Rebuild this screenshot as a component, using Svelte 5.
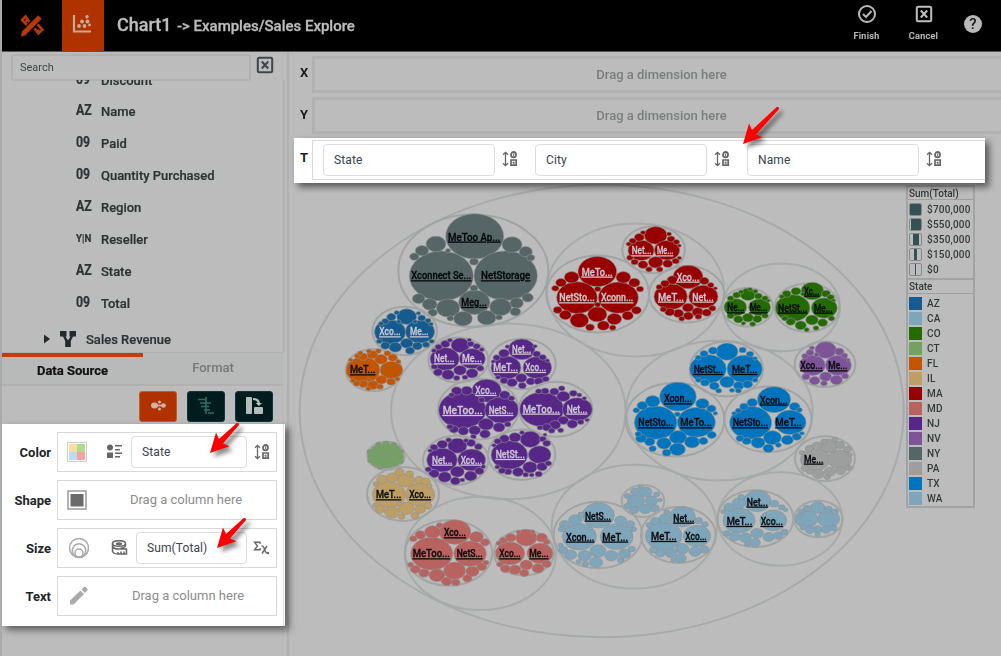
<script>
  const fields = [
    ['AZ', 'Name'], ['09', 'Paid'], ['09', 'Quantity Purchased'], ['AZ', 'Region'],
    ['Y|N', 'Reseller'], ['AZ', 'State'], ['09', 'Total']
  ];
  const dims = ['State', 'City', 'Name'];
  const sizes = [['$700,000', 13], ['$550,000', 10], ['$350,000', 6], ['$150,000', 3], ['$0', 1]];
  const colors = {
    AZ: '#165b8f', CA: '#7ea5ba', CO: '#236b00', CT: '#73a162', FL: '#c35500', IL: '#bd9f65', MA: '#980000',
    MD: '#b96360', NJ: '#572788', NV: '#7e5499', NY: '#566565', PA: '#9d9f9e', TX: '#0075bd', WA: '#7ea5ba'
  };
  const lightInk = ['AZ', 'NJ', 'MA'];
  // Enclosing rings: cx cy rx
  const rings = [
    [905, 693, 906], [625, 694, 352], [541, 1120, 227], [1006, 330, 266], [1444, 382, 176],
    [1258, 692, 280], [1003, 1040, 248], [1440, 1017, 187]
  ];
  // state, origin x, origin y, ring, bubbles (cx cy rx), labels (text, x, y, width)
  const clusters = [
    ['NY', 0, 0, [520, 272, 225], '524 169 86,424 288 95,617 287 94,523 367 46,408 192 28,366 212 18,343 230 12,636 194 28,677 215 18,692 233 10,444 212 6,522 245 11,522 324 10,356 356 17,389 373 20,398 398 12,444 384 33,489 416 26,451 415 8,560 413 26,602 381 31,597 412 8,650 369 18,646 395 14,683 353 15', [['MeToo Ap...', 444, 172, 157], ['Xconnect Se...', 334, 288, 180], ['NetStorage', 543, 288, 148], ['Meg...', 484, 368, 76]]],
    ['AZ', 0, 0, [314, 453, 97], '320 410 28,270 456 46,360 455 43,274 411 12,256 424 9,243 431 6,365 414 10,384 422 7,393 432 5,355 400 5,290 398 6,320 490 17,286 502 17,256 497 12,238 484 7,352 498 13,378 494 9,395 484 6,330 512 12,296 425 5,345 425 5', [['Xco...', 238, 456, 64], ['Me...', 330, 456, 56]]],
    ['FL', 0, 0, [221, 570, 84], '189 570 50,274 570 32,243 538 17,217 524 14,189 530 12,172 528 7,235 513 7,262 520 8,278 533 12,295 545 6,244 599 15,219 615 15,190 612 12,170 610 9,159 602 6,273 605 11,292 597 6,240 620 8,205 626 6,207 600 5,152 540 5,207 514 6,181 519 6', [['MeT...', 150, 570, 76]]],
    ['NJ', 0, 0, [475, 540, 90], '481 496 26,434 537 43,517 536 38,436 492 12,416 501 9,402 512 6,512 492 9,530 499 9,545 509 6,480 571 17,444 584 17,414 577 12,403 560 8,516 580 16,541 565 9,470 594 8,495 592 7,450 481 6,508 480 5', [['Net...', 402, 537, 61], ['Me...', 486, 537, 60]]],
    ['NJ', 0, 0, [666, 552, 101], '665 508 39,618 563 44,712 563 42,612 520 14,590 533 9,580 545 5,622 500 5,710 522 10,728 532 9,742 542 5,664 594 15,636 608 14,612 602 10,594 592 6,692 604 12,716 604 12,737 597 9,667 617 10,705 499 5', [['Net...', 636, 508, 58], ['MeT...', 580, 563, 74], ['Xco...', 676, 563, 62]]],
    ['NJ', 0, 0, [535, 688, 121], '560 632 43,487 690 70,605 690 50,500 632 15,470 633 14,455 645 7,614 645 14,634 655 8,558 733 21,524 751 16,490 753 14,462 748 12,450 740 8,597 742 16,623 733 8,555 762 14,520 770 7,545 660 8', [['Xco...', 526, 632, 64], ['MeToo...', 428, 692, 120], ['NetS...', 566, 692, 74]]],
    ['NJ', 0, 0, [767, 688, 110], '725 688 65,832 688 44,790 649 18,763 635 12,735 633 10,716 634 8,785 625 8,820 640 10,838 645 6,853 655 5,790 721 14,765 735 15,740 742 12,720 743 7,817 732 14,842 726 8,755 752 8,782 751 7,861 720 5', [['MeToo...', 668, 688, 112], ['Net...', 800, 688, 62]]],
    ['NJ', 0, 660, [467, 181, 98], '472 137 27,426 180 45,515 180 41,427 133 14,402 142 10,390 152 5,446 120 7,513 129 12,535 140 10,498 122 6,472 215 19,434 231 18,402 221 14,385 208 8,512 228 17,538 213 12,549 200 6,466 243 13,487 240 6', [['Net...', 396, 181, 61], ['Xco...', 482, 181, 64]]],
    ['NJ', 0, 660, [665, 164, 101], '691 118 29,628 165 54,719 164 32,645 112 16,613 116 13,593 124 9,582 136 5,666 98 6,728 117 9,740 130 10,735 104 4,690 202 20,654 216 15,624 215 10,606 212 9,592 201 6,726 200 14,745 190 8,716 222 9,677 224 7,695 225 6', [['NetSt...', 587, 164, 88]]],
    ['CT', 0, 660, [258, 167, 56], '258 147 20,232 152 17,284 151 17,218 168 13,245 168 17,272 171 16,297 170 12,230 186 15,256 190 17,282 187 15,258 131 8,236 134 8,281 134 8,210 155 7,304 155 6,212 182 7,303 184 7,240 201 7,272 202 8', []],
    ['IL', 0, 660, [309, 282, 108], '267 284 49,360 284 43,318 241 24,277 233 16,246 238 14,298 216 12,329 222 10,357 240 12,378 245 12,388 258 7,228 252 7,319 325 22,276 337 20,240 328 13,225 316 6,360 328 14,384 318 10,305 350 8,345 347 10,298 312 6', [['MeT...', 228, 285, 76], ['Xco...', 328, 285, 65]]],
    ['MD', 0, 660, [446, 459, 131], '465 396 46,395 461 62,510 461 48,398 396 22,361 405 14,340 416 9,419 376 8,529 411 19,555 427 12,464 512 31,411 526 22,372 519 14,346 508 13,332 494 7,517 514 18,545 500 13,558 488 7,440 544 14,467 547 11,502 535 12', [['Xco...', 432, 399, 66], ['MeToo...', 338, 462, 112], ['NetS...', 470, 462, 78]]],
    ['MD', 0, 660, [672, 459, 90], '679 413 30,630 460 43,720 460 38,632 413 14,610 422 10,596 430 6,698 395 5,725 413 15,740 426 8,679 495 17,645 509 16,616 506 13,600 493 8,714 505 16,740 492 12,673 519 12,655 396 5', [['Xco...', 598, 462, 64], ['Me...', 688, 462, 58]]],
    ['MA', 660, 0, [233, 342, 154], '232 275 57,171 353 60,295 353 59,155 292 20,123 308 14,106 325 9,310 292 20,343 308 15,360 327 9,233 327 8,232 403 27,178 421 26,136 405 16,113 390 11,283 417 20,323 407 15,349 391 13,250 437 16,210 442 11,278 443 8,233 374 7', [['MeTo...', 185, 277, 93], ['NetSto...', 118, 354, 106], ['Xconn...', 243, 354, 97]]],
    ['MA', 660, 0, [401, 209, 94], '407 166 32,363 211 38,441 211 37,358 172 13,338 183 9,326 192 6,453 177 10,469 186 8,478 197 4,407 247 20,369 254 13,344 246 9,330 233 8,443 251 13,467 243 9,478 234 5,387 268 8,419 268 8,369 158 6,447 162 6', [['Net...', 335, 213, 60], ['Me...', 411, 213, 49]]],
    ['MA', 660, 0, [500, 343, 113], '504 291 44,452 350 49,550 350 43,457 300 14,435 311 11,418 321 8,553 303 12,572 315 8,586 325 4,504 383 15,475 400 14,449 396 13,430 388 8,533 396 15,560 398 12,577 385 9,505 408 13,485 416 7,535 410 8', [['Xco...', 470, 292, 68], ['MeT...', 414, 352, 78], ['Net...', 517, 352, 64]]],
    ['CO', 660, 0, [682, 382, 77], '684 343 22,646 382 32,719 382 31,650 345 10,632 355 8,715 348 10,735 355 8,690 328 5,745 362 4,684 413 15,655 418 12,632 407 9,712 417 12,735 407 8,698 432 7,670 430 5,663 336 6,706 334 6', [['Ne...', 622, 384, 52], ['Me...', 689, 384, 53]]],
    ['CO', 660, 0, [861, 383, 97], '877 333 32,818 384 51,913 384 38,828 334 13,800 342 11,785 350 6,918 341 11,932 352 9,876 420 17,842 436 15,812 425 12,795 415 8,908 428 13,934 415 8,860 449 6,888 444 7,848 342 5,941 361 4', [['Xc...', 852, 334, 46], ['NetSt...', 774, 385, 88], ['Me...', 882, 385, 56]]],
    ['NV', 660, 0, [915, 553, 91], '917 510 30,877 556 38,955 556 38,870 518 10,855 528 8,958 515 12,973 527 8,985 540 4,917 590 16,884 602 14,858 590 10,949 600 16,975 588 9,912 610 8,876 504 6,890 524 6', [['Xco...', 841, 558, 67], ['Me...', 925, 558, 57]]],
    ['TX', 660, 0, [619, 567, 110], '621 515 31,564 567 54,674 567 52,579 512 12,552 521 10,535 533 7,668 510 9,690 522 9,705 535 5,621 606 20,583 618 13,555 608 11,535 600 7,656 617 14,683 613 13,705 600 7,596 632 7,636 631 6,655 632 7', [['NetSt...', 521, 569, 88], ['MeT...', 636, 569, 76]]],
    ['TX', 660, 0, [465, 719, 148], '474 650 54,407 728 63,529 727 56,398 664 20,367 677 14,349 691 8,547 671 18,574 686 12,586 700 5,474 772 24,432 790 20,389 785 14,363 775 14,398 806 9,355 762 8,516 786 21,550 783 12,575 765 12,472 808 22,440 818 11,472 703 7', [['Xcon...', 432, 657, 84], ['NetSto...', 355, 729, 105], ['MeTo...', 481, 729, 95]]],
    ['TX', 660, 0, [744, 718, 131], '762 659 49,692 728 62,811 727 46,697 668 14,672 680 11,655 692 7,642 700 5,824 680 14,838 690 7,757 773 25,714 788 19,680 783 12,660 775 10,802 780 16,830 770 12,846 760 5,745 805 14,775 795 7', [['Xcon...', 720, 661, 82], ['NetSto...', 638, 729, 106], ['MeT...', 766, 729, 79]]],
    ['PA', 660, 660, [915, 176, 90], '885 178 43,959 178 34,927 138 24,890 138 13,868 145 10,960 135 12,982 148 10,855 205 10,895 222 16,930 215 15,962 212 13,985 203 8,912 125 8,945 119 7,870 214 9,922 232 7,845 158 6,990 164 5', [['Me...', 852, 178, 58]]],
    ['CA', 660, 660, [234, 405, 133], '235 346 47,178 410 50,290 410 48,166 360 18,134 374 14,125 388 8,302 362 16,330 373 12,341 388 7,234 453 22,194 467 18,152 464 16,130 450 11,274 467 18,314 461 16,335 447 9,228 487 18,196 492 8,176 485 6,302 480 8,184 344 8,122 436 6', [['NetS...', 195, 349, 78], ['Xcon...', 138, 412, 85], ['MeT...', 247, 412, 77]]],
    ['CA', 660, 660, [369, 303, 64], '348 303 24,394 302 17,377 276 17,345 275 12,323 288 8,410 283 7,420 300 5,376 327 16,343 330 12,323 318 9,404 325 12,362 262 6', []],
    ['CA', 660, 660, [475, 405, 112], '487 350 38,431 408 54,531 408 40,434 356 16,405 363 12,388 375 8,536 362 10,555 373 8,487 446 18,453 459 16,421 459 13,400 450 10,525 455 16,553 448 12,482 475 15,460 480 6,440 336 7', [['Net...', 460, 355, 63], ['MeT...', 393, 410, 77], ['Xco...', 496, 410, 64]]],
    ['WA', 660, 660, [706, 356, 114], '712 303 40,657 361 47,760 361 39,657 309 18,627 322 14,610 335 6,763 311 11,785 322 8,797 330 5,711 400 17,676 413 16,644 409 15,620 400 9,746 411 15,774 407 12,793 396 9,705 428 14,682 432 7,664 291 8', [['Net...', 680, 307, 64], ['MeT...', 620, 365, 77], ['Xco...', 722, 365, 67]]],
    ['WA', 660, 660, [895, 357, 73], '893 323 20,859 357 32,926 357 31,862 325 10,845 335 8,925 328 10,945 335 8,893 388 12,870 390 12,850 382 8,918 389 12,940 384 9,893 403 6', []]
  ].map(([state, ox, oy, ring, list, labels]) => ({
    state, ox, oy, ring, labels,
    bubbles: list.split(',').map((b) => b.split(' ').map(Number))
  }));
  const k = 1.335;
  // Small rim bubbles are drawn a little fuller so that neighbours touch
  const rx = (r) => (r < 35 ? r + 2 : r + 1);
</script>

{#snippet sort()}
  <svg class="sort" width="16" height="16" viewBox="0 0 16 16" fill="none" stroke="#666">
    <path d="M3.500 1.500v13M1 3.800l2.500-2.500L6 3.800M1 12.200l2.500 2.500L6 12.200" stroke-width="1.300" />
    <ellipse cx="11.500" cy="3.700" rx="2.500" ry="2.700" stroke-width="1.800" />
    <path d="M9 9h5.200v5.200H9z" stroke-width="1.700" />
    <path d="M11.600 2.500v2.500M11.800 10.500v2.500M10.500 11.800h2" stroke-width="1" />
  </svg>
{/snippet}

{#snippet closeBox()}
  <svg width="18" height="18" viewBox="0 0 18 18" fill="none" stroke="currentColor" stroke-width="2">
    <rect x="1.800" y="1.800" width="14.400" height="14.400" rx="1.500" /><path d="M5.800 5.500l6.400 7M12.200 5.500l-6.400 7" />
  </svg>
{/snippet}

{#snippet arrow(cls, len)}
  <svg class="arrow {cls}" width="50" height="54" viewBox="0 -44 50 54">
    <path d="M1 0L7 -20.500L10 -14L{len - 1.300} {-len - 1}Q{len + 1.500} {-len - 1.500} {len + 1} {1 - len}L14 -9.500L20.500 -6.700Z" fill="#f00" />
  </svg>
{/snippet}

<div class="app">
  <header>
    <div class="logo soft">
      <svg width="24" height="24" viewBox="0 0 24 24" fill="none" stroke="#b83907">
        <path d="M4 20L20 4" stroke-width="5" />
        <path d="M9.500 9L5.500 3.500L2 7l5 5M14.500 15.500l4 5 4-4-5-5M5.500 8.500l2-2M17 19l2-2" stroke-width="2.500" />
        <path d="M1 23.500l1.200-6 4.600 4.600z" fill="#b83907" stroke="none" />
      </svg>
    </div>
    <div class="tile">
      <svg class="soft" width="20" height="20" viewBox="0 0 20 20" fill="none" stroke="#c7aa99" stroke-width="2.200">
        <path d="M2 1v16.500h17" />
        <g fill="#c7aa99" stroke="none"><circle cx="7" cy="12" r="1.900" /><circle cx="10" cy="7.500" r="1.900" /><circle cx="12.500" cy="12" r="1.900" /><circle cx="15.500" cy="7.500" r="1.900" /><circle cx="15" cy="2.800" r="1.700" /><circle cx="17.500" cy="11" r="1.400" /></g>
      </svg>
    </div>
    <h1 class="soft">Chart1 <small>-&gt; Examples/Sales Explore</small></h1>
    <div class="action soft">
      <svg width="20" height="20" viewBox="0 0 20 20" fill="none" stroke="#b9b9b9" stroke-width="2"><circle cx="10" cy="10" r="8" /><path d="M6 10l3 3 5.500-6" /></svg>
      <span>Finish</span>
    </div>
    <div class="action soft">{@render closeBox()}<span>Cancel</span></div>
    <div class="help soft">?</div>
  </header>

  <div class="body">
    <aside>
      <div class="tools soft"><div class="search">Search</div>{@render closeBox()}</div>
      <div class="tree soft">
        <div class="clipped"><div class="row"><b>09</b><span>Discount</span></div></div>
        {#each fields as [kind, name]}
          <div class="row"><b class:bool={kind === 'Y|N'}>{kind}</b><span>{name}</span></div>
        {/each}
        <div class="row folder">
          <svg width="6" height="10"><path d="M0 0.500L6 5L0 9.500Z" fill="#222a2b" /></svg>
          <svg width="16" height="16" viewBox="0 0 16 16" fill="#222a2b"><path d="M0 0h6.500v5.500H5.500L8 9.500l2.500-4H9.500V0H16v5.500h-3L10.800 10V16H5.200v-6L3 5.500H0z" /></svg>
          <span>Sales Revenue</span>
        </div>
      </div>
      <div class="tabs soft"><div class="tab on">Data Source</div><div class="tab">Format</div></div>
      <div class="modes soft">
        <div class="mode orange"><svg width="38" height="30" fill="#cbb5a8"><ellipse cx="15.500" cy="14.500" rx="3.500" ry="3" /><path d="M17 13.700h8v1.600h-8z" /><circle cx="20.500" cy="11" r="1.500" /><circle cx="20.500" cy="18" r="1.500" /><circle cx="24.500" cy="14.500" r="2.300" /></svg></div>
        <div class="mode"><svg width="38" height="30" stroke="#2f6a69" stroke-width="1.600"><path d="M19 6v17M11 8.500h8M13 12h11M14 15.500h8M17 19h6M21 22h6" /></svg></div>
        <div class="mode"><svg width="38" height="30" fill="#b5bcbc"><rect x="11" y="6" width="6" height="17" rx="1" /><rect x="19" y="16" width="9" height="7" rx="1" /><path d="M18 7q6.500 0 7 5h2l-3 3-3.500-3h2q-.5-3-4.500-3z" /></svg></div>
      </div>

      <section class="bindings">
        <div class="bind"><label>Color</label>
          <div class="well">
            <svg class="lead" width="20" height="20"><rect x=".5" y=".5" width="19" height="19" fill="#fff" stroke="#ccc" /><path d="M2 2h8v8H2z" fill="#fbdda3" /><path d="M10 2h8v8h-8z" fill="#aedb8d" /><path d="M2 10h8v8H2z" fill="#b9dcf2" /><path d="M10 10h8v8h-8z" fill="#faa1a0" /></svg>
            <svg class="kind" width="16" height="15" viewBox="0 0 16 15" fill="#666"><circle cx="3" cy="3.500" r="3" /><path d="M0 8.500h6V14H0zM8 1h7v1.500H8zM8 5h5v1.500H8zM8 8.500h7V10H8zM8 12h5v1.500H8z" /></svg>
            <div class="field">State</div>
            {@render sort()}
          </div>
        </div>
        <div class="bind"><label>Shape</label>
          <div class="well"><svg class="lead" width="20" height="20"><rect x="1" y="1" width="18" height="18" fill="#fff" stroke="#999" stroke-width="1.500" /><rect x="3.500" y="4" width="13" height="12.500" fill="#6b6b6b" /></svg><span class="hint">Drag a column here</span></div>
        </div>
        <div class="bind"><label>Size</label>
          <div class="well">
            <svg class="lead" width="22" height="22" fill="none" stroke="#aaa" stroke-width="1.500"><circle cx="12" cy="11" r="9.500" /><circle cx="12" cy="13.500" r="6.700" /><circle cx="12" cy="16" r="4" /></svg>
            <svg class="kind size" width="17" height="15" viewBox="0 0 17 15" fill="none" stroke="#666" stroke-width="1.500"><ellipse cx="8" cy="3.500" rx="6.500" ry="2.800" /><ellipse cx="8" cy="3.700" rx="2.500" ry=".8" /><path d="M1.500 3.500v3q2 3 7 2.500h7v5H7q-6 0-5.500-4M1.500 6.500v5M14.500 4v2q-1 2-5 2.300M7 12V14M10 11.500v2.500M13 11.500v2.500" /></svg>
            <div class="field sum">Sum(Total)</div>
            <svg class="sigma" width="17" height="16" viewBox="0 0 17 16" fill="none" stroke="#666" stroke-width="1.400"><path d="M7 4V2.200H1.500L4.500 6 1.500 9.800H7V8M8.500 6q1.500-.5 2.300 1.500l1.900 4.500q.8 1.500 2.300 1M14 6L9 13.500" /><circle cx="15" cy="13" r=".5" /></svg>
          </div>
        </div>
        <div class="bind"><label>Text</label>
          <div class="well"><svg class="lead" width="22" height="20" fill="#aaa"><path d="M3 14.500L13.500 4.500l3.500 3.500L6.500 18.500H3zM14.500 3.500L17 1q1-.6 2 .3l1.300 1.400q.8 1 0 1.800L18 7z" /></svg><span class="hint wide">Drag a column here</span></div>
        </div>
      </section>
    </aside>

    <main>
      <div class="axis soft"><b>X</b><div class="drop">Drag a dimension here</div></div>
      <div class="axis second soft"><b>Y</b><div class="drop">Drag a dimension here</div></div>
      <div class="band"></div>
      <section class="groups">
        <b>T</b>
        <div class="slots">
          {#each dims as d}
            <div class="field">{d}</div>{@render sort()}
          {/each}
        </div>
      </section>
      <div class="view soft">
        <svg width="617" height="473" viewBox="-33 9 1851 1419">
          <g fill="none" stroke="#a6aaa9" stroke-width="6">
            {#each rings as [x, y, r]}<ellipse cx={x} cy={y} rx={r} ry={r / k} />{/each}
          </g>
          {#each clusters as c}
            <g transform="translate({c.ox} {c.oy})">
              <ellipse cx={c.ring[0]} cy={c.ring[1]} rx={c.ring[2]} ry={c.ring[2] / k} fill="none" stroke="#a0a4a3" stroke-width="6" />
              <g fill={colors[c.state]} stroke="#8f9190" stroke-width="1.800">
                {#each c.bubbles as [x, y, r]}<ellipse cx={x} cy={y} rx={rx(r)} ry={rx(r) * 0.78} />{/each}
              </g>
              {#each c.labels as [t, x, y, w]}
                <text {x} y={y + 10} textLength={w} lengthAdjust="spacingAndGlyphs" class:light={lightInk.includes(c.state)}>{t}</text>
              {/each}
            </g>
          {/each}
        </svg>
        <div class="legend">
          <h2>Sum(Total)</h2>
          <ul>
            {#each sizes as [t, w]}<li><i class="gauge"><i style="width:{w}px"></i></i>{t}</li>{/each}
          </ul>
          <h2 class="state">State</h2>
          <ul>
            {#each Object.entries(colors) as [t, c]}<li><i class="swatch" style="background:{c}"></i>{t}</li>{/each}
          </ul>
        </div>
      </div>
    </main>
  </div>
  {@render arrow('a1', 29)}
  {@render arrow('a2', 29)}
  {@render arrow('a3', 36)}
</div>

<style>
  :global(body) { background: #bcbcbc; overflow: hidden; }
  * { box-sizing: border-box; }
  svg { display: block; flex: none; }
  .app { position: relative; width: 1001px; height: 656px; overflow: hidden; font: 13px Roboto, sans-serif; color: #2b3333; background: #bcbcbc; border-left: 2px solid #aaa; }
  .soft { filter: blur(0.55px); }
  header { display: flex; height: 52px; background: #000; border-bottom: 1px solid #555; color: #bdbdbd; }
  .logo { width: 60px; padding: 13px 0 0 18px; }
  .tile { width: 42px; background: #b03200; padding: 14px 0 0 10px; }
  h1 { flex: 1; margin: 0 0 0 13px; font-size: 18px; line-height: 49px; font-weight: 500; white-space: nowrap; -webkit-text-stroke: .3px; }
  small { font-size: 15px; margin-left: 1px; letter-spacing: -0.01px; }
  .action { width: 57px; display: flex; flex-direction: column; align-items: center; font-size: 9px; padding-top: 4px; font-weight: 500; position: relative; left: -1px; }
  .action svg { height: 20px; }
  .action span { margin-top: 6px; line-height: 12px; letter-spacing: .3px; -webkit-text-stroke: .2px; }
  .help { width: 18px; height: 18px; border-radius: 50%; background: #b9b9b9; color: #111; font: 500 15px/18px Roboto, sans-serif; text-align: center; margin: 15px 19px 0 11px; }
  .body { display: flex; height: 604px; }
  aside { width: 287px; border-right: 2px solid #b1b1b1; }
  .tools { display: flex; gap: 5px; height: 28px; padding: 2px 0 0 9px; color: #3d4747; }
  .tools > svg { margin-top: 2px; }
  .search { width: 240px; height: 27px; border: 2px solid #b1b1b1; border-radius: 3px; font-size: 11px; line-height: 23px; padding-left: 7px; flex: none; }
  .tree { height: 272px; overflow: hidden; border-right: 2px solid #b3b3b3; width: 283px; -webkit-text-stroke: .2px; }
  .clipped { height: 15px; overflow: hidden; display: flex; align-items: flex-end; }
  .row { height: 32px; display: flex; align-items: center; padding-left: 74px; flex: none; font-weight: 500; }
  .row b { width: 25px; font: 700 14px Roboto, sans-serif; transform: scaleX(.88); transform-origin: left; margin-top: -2px; }
  .row b.bool { font-size: 11px; }
  .row:not(.folder) span { letter-spacing: -.03px; }
  .clipped .row { margin-bottom: -1px; }
  .folder { padding-left: 42px; gap: 10px; height: 40px; }
  .tabs { display: flex; height: 34px; border-top: 1px solid #afafaf; border-bottom: 2px solid #b1b1b1; background: #b8b9b9; width: 281px; }
  .tab { width: 141px; text-align: center; color: #777; line-height: 29px; font-weight: 500; }
  .on { width: 142px; color: #111; font-weight: 700; border-top: 4px solid #c04000; line-height: 28px; -webkit-text-stroke: .2px; }
  .modes { display: flex; gap: 10px; padding: 5px 0 0 137px; height: 38px; }
  .mode { width: 38px; height: 31px; border-radius: 3px; background: #001c1c; border: 1px solid #134; }
  .mode svg { margin: -1px; }
  .orange { background: #b03200; border-color: #c06020; }
  .bindings { position: relative; width: 283px; height: 202px; background: #fff; border-right: 1px solid #fff; box-shadow: 4px 4px 7px rgba(0,0,0,.5), inset -1px 0 #ddd; padding: 8px 0 0; display: flex; flex-direction: column; gap: 8px; }
  .bind { display: flex; align-items: center; height: 40px; }
  label { width: 49px; text-align: right; font-weight: 700; color: #1d2428; margin-right: 6px; }
  .well { width: 220px; height: 40px; border: 1px solid #d8d8d8; display: flex; align-items: center; padding-left: 9px; }
  .kind { margin-left: 20px; margin-top: -2px; }
  .field { border: 1px solid #dadddd; border-radius: 4px; height: 32px; line-height: 30px; padding-left: 10px; font-size: 12px; letter-spacing: .1px; color: #39434a; }
  .well .field { width: 116px; margin-left: 8px; flex: none; }
  .well .sum { width: 111px; margin-left: 8px; }
  .well .size { margin-left: 22px; }
  .well .sort { margin: -1px 0 0 7px; }
  .hint { flex: 1; text-align: center; padding-left: 9px; color: #8c8c8c; margin-top: -1px; }
  .hint.wide { padding-left: 11px; }
  .sigma { margin: -1px 0 0 6px; }
  main { flex: 1; min-width: 0; }
  .axis { display: flex; align-items: center; padding-left: 11px; height: 36px; margin-top: 4px; }
  .axis b, .groups b { flex: none; width: 12px; color: #181c1c; font-size: 13px; }
  .axis b { margin-top: -3px; }
  .axis.second { height: 37px; margin-top: 5px; }
  .drop { flex: none; width: 699px; height: 37px; line-height: 31px; border: 3px solid #b1b1b1; text-align: center; color: #7b7d7d; font-weight: 500; }
  .band { height: 4px; }
  .groups { position: relative; z-index: 1; margin-left: 5px; width: 691px; height: 45px; background: #fff; box-shadow: 4px 4px 7px rgba(0,0,0,.55); display: flex; padding: 2px 0 0 6px; }
  .groups b { line-height: 36px; }
  .slots { width: 673px; height: 40px; border: 1px solid #d8d8d8; border-right: 0; display: flex; align-items: center; padding-left: 10px; }
  .slots .field { width: 172px; }
  .slots .sort { margin: -2px 17px 0 7px; }
  .view { display: flex; height: 473px; }
  text { font: 500 30px Roboto, sans-serif; fill: #05080a; stroke: #05080a; stroke-width: .8px; text-decoration: underline; }
  text.light { fill: #cfc9d3; stroke: #cfc9d3; }
  .legend { width: 69px; height: 323px; margin-top: 2px; border: 2px solid #a3a3a3; font-size: 10px; font-weight: 500; color: #333a3a; }
  h2 { margin: 0; font: 500 10px/13px Roboto, sans-serif; height: 13px; padding-left: 1px; border-bottom: 1px solid #9f9f9f; }
  h2.state { border-top: 2px solid #a3a3a3; height: 16px; }
  ul { list-style: none; margin: 0; padding: 2px 0 1px 1px; }
  li { height: 15px; display: flex; align-items: center; gap: 5px; white-space: nowrap; letter-spacing: .2px; }
  .swatch, .gauge { width: 13px; height: 13px; flex: none; }
  .gauge { border: 1px solid #888; border-radius: 2px; display: flex; justify-content: center; overflow: hidden; }
  .gauge i { background: #345256; flex: none; }
  .arrow { position: absolute; z-index: 3; overflow: visible; filter: drop-shadow(4px 4px 2px rgba(0,0,0,.45)); }
  .a1 { left: 207px; top: 409px; }
  .a2 { left: 214px; top: 504px; }
  .a3 { left: 740px; top: 100px; }
</style>
